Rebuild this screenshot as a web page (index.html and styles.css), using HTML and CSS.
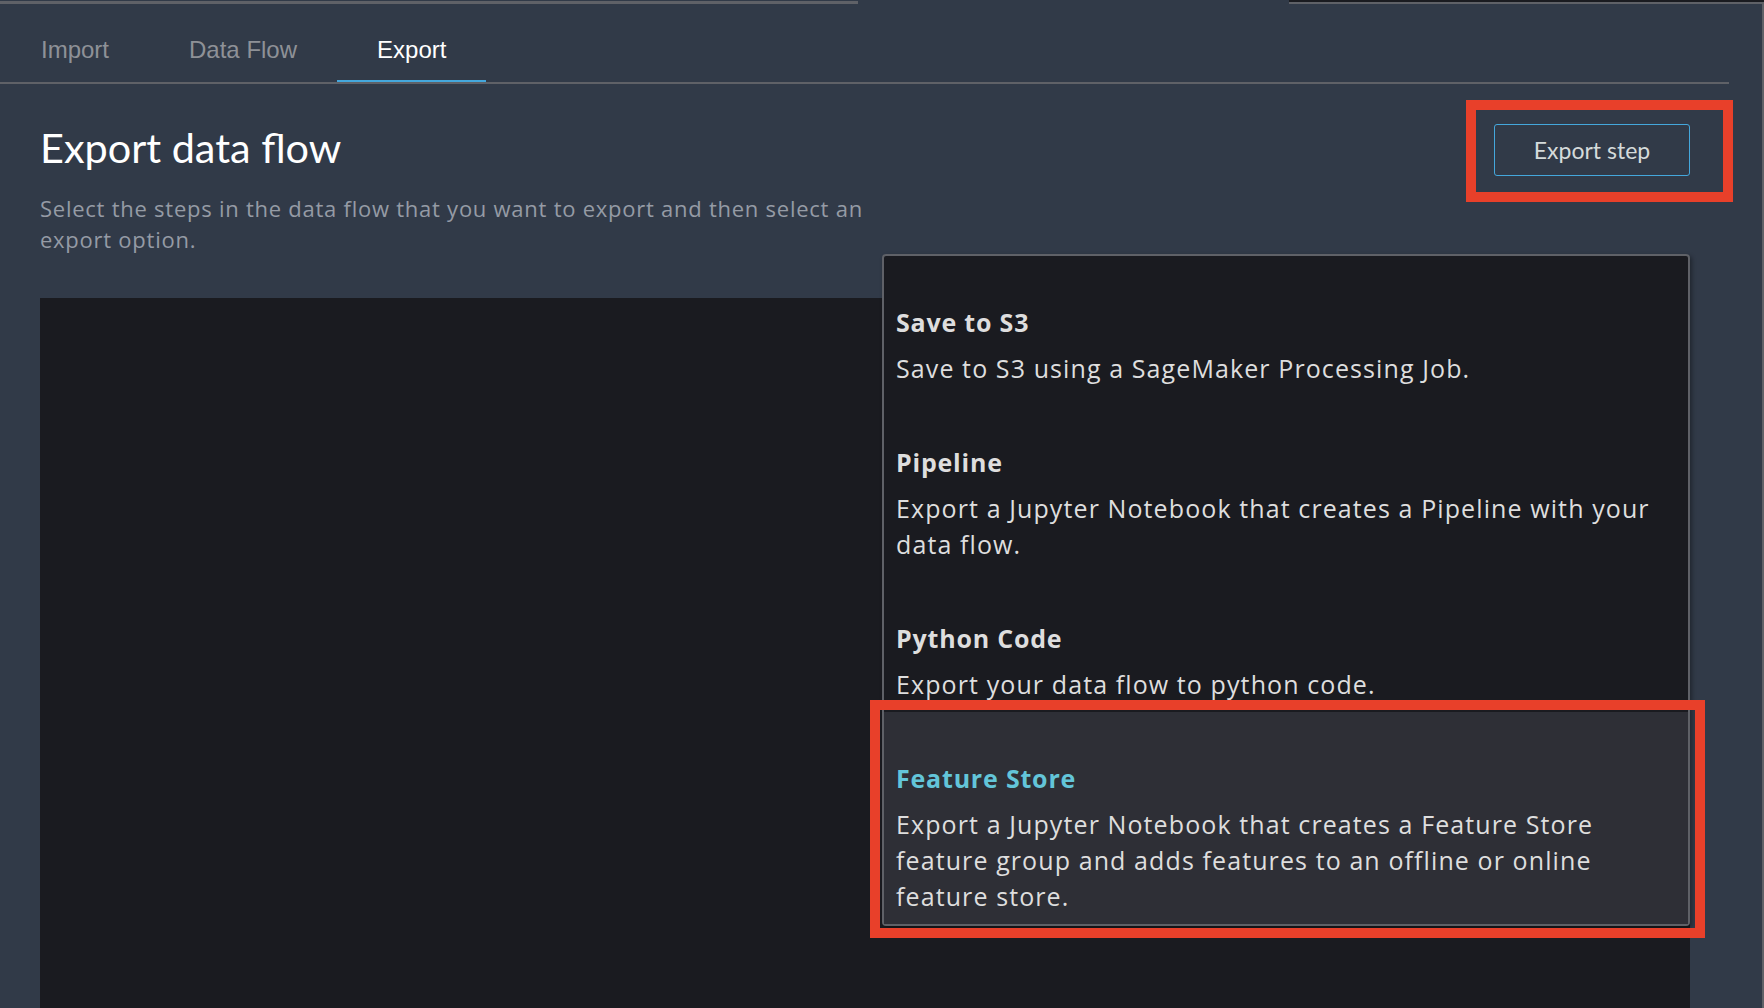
FILE: index.html
```html
<!DOCTYPE html>
<html lang="en">
<head>
<meta charset="utf-8">
<title>Export data flow</title>
<link rel="stylesheet" href="styles.css">
</head>
<body>
<div class="page">
  <div class="topstrip">
    <div class="strip-left"></div>
    <div class="strip-gap"></div>
    <div class="strip-right"></div>
  </div>
  <nav class="tabs">
    <div class="tab">Import</div>
    <div class="tab">Data Flow</div>
    <div class="tab active">Export</div>
  </nav>
  <main class="content">
    <div class="header">
      <div class="intro">
        <h1 class="title">Export data flow</h1>
        <p class="subtitle">Select the steps in the data flow that you want to export and then select an export option.</p>
      </div>
      <div class="btn-wrap">
        <button class="btn">Export step</button>
        <span class="mark mark-btn"></span>
      </div>
    </div>
    <div class="canvas"></div>
    <div class="menu">
      <div class="item">
        <div class="item-title">Save to S3</div>
        <div class="item-desc">Save to S3 using a SageMaker Processing Job.</div>
      </div>
      <div class="item">
        <div class="item-title">Pipeline</div>
        <div class="item-desc">Export a Jupyter Notebook that creates a Pipeline with your data flow.</div>
      </div>
      <div class="item">
        <div class="item-title">Python Code</div>
        <div class="item-desc">Export your data flow to python code.</div>
      </div>
      <div class="item hover">
        <div class="item-title">Feature Store</div>
        <div class="item-desc">Export a Jupyter Notebook that creates a Feature Store feature group and adds features to an offline or online feature store.</div>
        <span class="mark mark-item"></span>
      </div>
    </div>
  </main>
</div>
</body>
</html>
```
FILE: styles.css
```css
html, body {
  margin: 0;
  padding: 0;
  background: #313a48;
  overflow: hidden;
  height: 1008px;
}
.page {
  width: 1762px;
  height: 1008px;
  border-right: 2px solid #5f6167;
  box-sizing: content-box;
  font-family: Lato, "Open Sans", sans-serif;
}
.topstrip {
  display: flex;
  height: 4px;
}
.strip-left {
  width: 858px;
  margin-top: 1px;
  background: #5f6167;
}
.strip-gap {
  width: 431px;
}
.strip-right {
  flex: 1;
  background: #1a1b20;
  border-bottom: 2px solid #5f6167;
  margin-right: -2px;
}
.tabs {
  display: flex;
  margin-right: 33px;
  border-bottom: 2px solid #5f6167;
  font-family: "Liberation Sans", Arial, sans-serif;
}
.tab {
  font-size: 24px;
  line-height: 28px;
  padding: 32px 40px 16px 40px;
  color: #8e9197;
  border-bottom: 2px solid transparent;
}
.tab:first-child {
  padding-left: 41px;
}
.tab.active {
  color: #ffffff;
  border-bottom-color: #44a7dc;
}
.content {
  position: relative;
  padding: 39px 72px 0 40px;
}
.header {
  display: flex;
  justify-content: space-between;
  align-items: flex-start;
}
.title {
  margin: 0;
  font-size: 41.4px;
  line-height: 48px;
  font-weight: 400;
  color: #ffffff;
}
.subtitle {
  margin: 22px 0 0 0;
  max-width: 860px;
  font-family: "Open Sans", Lato, sans-serif;
  font-size: 22px;
  line-height: 31px;
  letter-spacing: 0.75px;
  color: #959ba5;
}
.btn-wrap {
  position: relative;
  margin-top: 1px;
}
.btn {
  width: 196px;
  height: 52px;
  background: transparent;
  border: 1px solid #44a7dc;
  border-radius: 3px;
  color: #d5dbdb;
  font-family: Lato, "Open Sans", sans-serif;
  font-size: 23px;
  padding: 0;
}
.mark {
  position: absolute;
  border: 10px solid #e8402a;
  pointer-events: none;
}
.mark-btn {
  top: -24px;
  left: -28px;
  right: -43px;
  bottom: -26px;
}
.canvas {
  margin-top: 43px;
  height: 720px;
  background: #1a1b20;
}
.menu {
  position: absolute;
  top: 170px;
  right: 72px;
  width: 808px;
  box-sizing: border-box;
  border: 2px solid #5f6167;
  border-radius: 4px;
  background: #1a1b20;
  box-shadow: 2px 2px 4px rgba(0, 0, 0, 0.35);
  font-family: "Open Sans", Lato, sans-serif;
}
.item {
  position: relative;
  padding: 48px 17px 10px 12px;
  color: #dedede;
}
.item.hover {
  background: #2e2f36;
}
.item-title {
  font-size: 25px;
  line-height: 36px;
  font-weight: 700;
  letter-spacing: 0.8px;
  margin-bottom: 10px;
}
.item.hover .item-title {
  color: #63c5d9;
}
.item-desc {
  font-size: 25px;
  line-height: 36px;
  letter-spacing: 1.1px;
}
.mark-item {
  top: -12px;
  left: -14px;
  right: -17px;
  bottom: -14px;
}
```
